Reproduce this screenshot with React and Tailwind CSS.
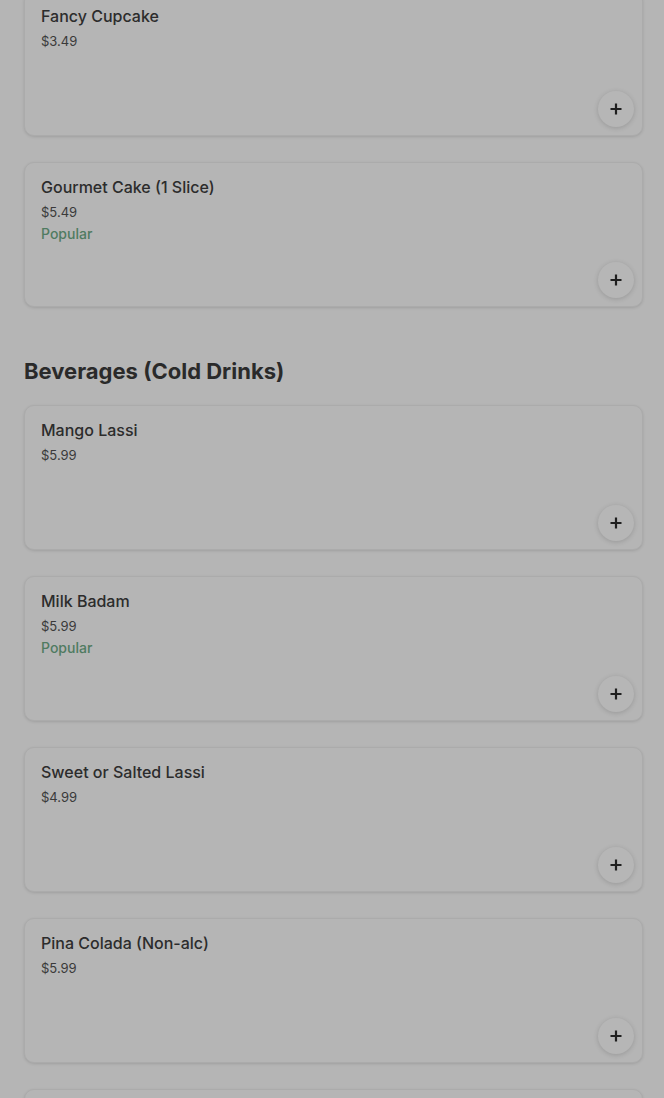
import React from "react";

const Plus = () => (
  <svg width="14" height="14" viewBox="0 0 14 14" fill="none">
    <path d="M7 1.5v11M1.5 7h11" stroke="#1f1f1f" strokeWidth="2.2" strokeLinecap="butt" />
  </svg>
);

function Card({ name, price, popular }) {
  return (
    <div className="h-[145px] shrink-0 rounded-[10px] border border-[#ababab] shadow-[0_1px_3px_rgba(0,0,0,0.12)] bg-[#b5b5b5] flex flex-col pl-4 pt-3">
      {name && <div className="text-[16px] leading-6 font-medium text-[#2c2c2c]">{name}</div>}
      {price && <div className="mt-[3px] text-[13px] leading-5 text-[#3a3a3a]">{price}</div>}
      {popular && (
        <div className="mt-[2px] text-[14px] leading-5 font-medium text-[#4f7b61]">Popular</div>
      )}
      <div className="mt-auto self-end mr-2 mb-2 w-9 h-9 rounded-full bg-[#b6b6b6] shadow-[0_1px_5px_rgba(0,0,0,0.16)] flex items-center justify-center">
        <Plus />
      </div>
    </div>
  );
}

export default function App() {
  const desserts = [
    { name: "Fancy Cupcake", price: "$3.49" },
    { name: "Gourmet Cake (1 Slice)", price: "$5.49", popular: true },
  ];
  const drinks = [
    { name: "Mango Lassi", price: "$5.99" },
    { name: "Milk Badam", price: "$5.99", popular: true },
    { name: "Sweet or Salted Lassi", price: "$4.99" },
    { name: "Pina Colada (Non-alc)", price: "$5.99" },
    { name: "", price: "" },
  ];
  return (
    <div
      className="h-[1098px] overflow-hidden bg-[#b5b5b5] pl-6 pr-[21px]"
      style={{ fontFamily: "Inter, 'Noto Sans', sans-serif" }}
    >
      <div className="-mt-[9px] flex flex-col gap-[26px]">
        {desserts.map((d, i) => (
          <Card key={i} {...d} />
        ))}
      </div>
      <h2 className="mt-[50px] text-[22px] leading-7 font-bold tracking-normal text-[#2a2a2a]">
        Beverages (Cold Drinks)
      </h2>
      <div className="mt-5 flex flex-col gap-[26px]">
        {drinks.map((d, i) => (
          <Card key={i} {...d} />
        ))}
      </div>
    </div>
  );
}
